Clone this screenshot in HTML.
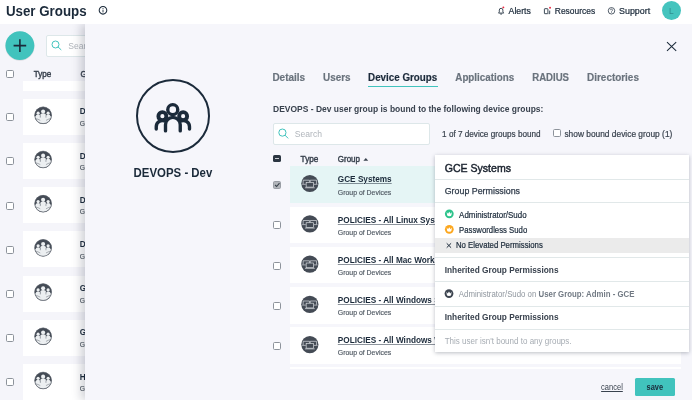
<!DOCTYPE html>
<html lang="en">
<head>
<meta charset="utf-8">
<title>User Groups</title>
<style>
*{box-sizing:border-box;margin:0;padding:0}
html,body{width:692px;height:400px;overflow:hidden;background:#f5f5fa;font-family:"Liberation Sans",sans-serif;color:#1b2a3a}
.a{position:absolute}
.t{position:absolute;white-space:nowrap;line-height:1.12;transform-origin:0 50%}
svg{position:absolute;overflow:visible}
.lrow{left:23px;width:80px;height:36px;background:#fff}
.cb{position:absolute;width:8px;height:8px;border:1px solid #8d939b;border-radius:1.6px;background:#fff}
.row{left:290.2px;width:391px;height:36.6px;background:#fff}
.hr{position:absolute;left:435px;width:254px;height:1px;background:#e1e8e9}
</style>
</head>
<body>
<div id="root" style="position:absolute;left:0;top:0;width:692px;height:400px;will-change:transform">
<!-- ============ background page (User Groups list) ============ -->
<div class="a" style="left:0;top:24px;width:692px;height:376px;background:#f5f5fa"></div>
<svg style="left:0px;top:24px" width="40" height="40" viewBox="0 24 40 40"><circle cx="19.9" cy="46.2" r="14.6" fill="rgba(0,0,0,.10)"/><circle cx="19.9" cy="45.6" r="14.45" fill="#41c3bd"/></svg>
<svg style="left:13px;top:39px;transform:translate(0.6px,0.3px)" width="12.6" height="12.6" viewBox="0 0 12.6 12.6"><path d="M6.3 0v12.6M0 6.3h12.6" stroke="#1b2a3a" stroke-width="1.6" fill="none"/></svg>
<div class="a" style="left:46.4px;top:35.4px;width:120px;height:21.4px;background:#fff;border:1px solid #dde7e9;border-radius:2px"></div>
<svg style="left:51px;top:40px;transform:translate(0.4px,0.4px)" width="10" height="9.6" viewBox="0 0 10 9.6"><circle cx="4.1" cy="4.1" r="3.5" fill="none" stroke="#41c3bd" stroke-width="1"/><path d="M6.7 6.6L9.6 9.3" stroke="#41c3bd" stroke-width="1" stroke-linecap="round"/></svg>
<div class="cb" style="left:6px;top:70.4px"></div>
<div class="a lrow" style="top:81.4px;height:9.2px"></div>
<div class="a lrow" style="top:99px;height:36px"></div>
<div class="a lrow" style="top:143px;height:36px"></div>
<div class="a lrow" style="top:187px;height:36px"></div>
<div class="a lrow" style="top:231px;height:36px"></div>
<div class="a lrow" style="top:276px;height:36px"></div>
<div class="a lrow" style="top:320px;height:36px"></div>
<div class="a lrow" style="top:364px;height:40px"></div>
<div class="cb" style="left:6px;top:113px"></div>
<div class="cb" style="left:6px;top:157px"></div>
<div class="cb" style="left:6px;top:202px"></div>
<div class="cb" style="left:6px;top:246px"></div>
<div class="cb" style="left:6px;top:290px"></div>
<div class="cb" style="left:6px;top:334px"></div>
<div class="cb" style="left:6px;top:378px"></div>
<svg width="0" height="0" style="left:0;top:0">
  <defs>
    <clipPath id="ugc"><circle cx="8.7" cy="8.7" r="8.3"/></clipPath>
    <g id="ug">
      <circle cx="8.7" cy="8.7" r="8.6" fill="#444b55"/>
      <g clip-path="url(#ugc)" fill="#eceff1">
        <path d="M0 9.5q4.3 1.4 8.7 1.4t8.7-1.4V18H0z"/>
        <circle cx="3.7" cy="6.55" r="1.6"/><path d="M1.35 12V9.7q0-1.7 2.3-1.7t2.3 1.7V12z"/>
        <circle cx="13.7" cy="6.55" r="1.6"/><path d="M11.45 12V9.7q0-1.7 2.3-1.7t2.3 1.7V12z"/>
        <circle cx="8.7" cy="4.85" r="2.05"/><path d="M5.85 13V8.6q0-2 2.85-2t2.85 2V13z"/>
      </g>
      <g stroke="#444b55" stroke-width=".4" fill="none">
        <path d="M5.85 8.6v2.5M11.55 8.6v2.5M1 11.9q2.8 .6 4.85 1.9M16.4 11.9q-2.8 .6-4.85 1.9"/>
      </g>
      <circle cx="8.7" cy="8.7" r="8.35" fill="none" stroke="#59606a" stroke-width=".6"/>
    </g>
    <g id="dg">
      <circle cx="8.6" cy="8.6" r="8.6" fill="#444b55"/>
      <g fill="none" stroke="#dde0e4" stroke-width=".68">
        <path d="M1.9 9V5.3h6.3v2.1M15.3 9V5.3H9v2.1"/>
        <path d="M.9 9.4h3.6M12.7 9.4h3.6"/>
        <rect x="4.9" y="7.5" width="7.4" height="4.7" fill="#444b55"/>
        <path d="M3.7 12.9h9.8"/>
      </g>
    </g>
    <g id="crown">
      <path d="M1.8 2.6L3.1 4.3L4.4 2.35L5.7 4.3L7 2.6L6.6 5.6Q6.5 6.8 4.4 6.8Q2.3 6.8 2.2 5.6z" fill="#fff"/>
    </g>
  </defs>
</svg>
<svg style="left:34px;top:106px;transform:translate(0.42px,0.6px)" width="17.4" height="17.4"><use href="#ug"/></svg>
<svg style="left:34px;top:150px;transform:translate(0.42px,0.8px)" width="17.4" height="17.4"><use href="#ug"/></svg>
<svg style="left:34px;top:195px;transform:translate(0.42px,0.0px)" width="17.4" height="17.4"><use href="#ug"/></svg>
<svg style="left:34px;top:239px;transform:translate(0.42px,0.2px)" width="17.4" height="17.4"><use href="#ug"/></svg>
<svg style="left:34px;top:283px;transform:translate(0.42px,0.4px)" width="17.4" height="17.4"><use href="#ug"/></svg>
<svg style="left:34px;top:327px;transform:translate(0.42px,0.6px)" width="17.4" height="17.4"><use href="#ug"/></svg>
<svg style="left:34px;top:371px;transform:translate(0.42px,0.8px)" width="17.4" height="17.4"><use href="#ug"/></svg>
<div class="t" id="t5" style="left:68px;top:42px;line-height:9px;font-size:8.2px;font-weight:400;color:#b0b5bb;transform:translateX(0.30px) scaleX(1.048);">Search</div>
<div class="t" id="t6" style="left:33px;top:70px;line-height:9px;font-size:8.2px;font-weight:400;color:#39424e;transform:translateX(0.80px) scaleX(0.986);-webkit-text-stroke:0.4px #39424e">Type</div>
<div class="t" id="t7" style="left:80px;top:70px;line-height:9px;font-size:8.2px;font-weight:400;color:#39424e;transform:translateX(0.50px) scaleX(0.975);-webkit-text-stroke:0.4px #39424e">Group</div>
<div class="t" id="t8" style="left:79px;top:106px;line-height:10px;font-size:8.4px;font-weight:700;color:#1b2a3a;transform:translateX(0.80px) scaleX(0.981);">DEVOPS - Admin</div>
<div class="t" id="t9" style="left:79px;top:120px;line-height:7px;font-size:6.7px;font-weight:400;color:#4f5862;transform:translateX(0.70px) scaleX(1.000);-webkit-text-stroke:0.15px #4f5862">Group of Users</div>
<div class="t" id="t10" style="left:79px;top:151px;line-height:10px;font-size:8.4px;font-weight:700;color:#1b2a3a;transform:translateX(0.80px) scaleX(0.981);">DEVOPS - Dev</div>
<div class="t" id="t11" style="left:79px;top:164px;line-height:7px;font-size:6.7px;font-weight:400;color:#4f5862;transform:translateX(0.70px) scaleX(1.000);-webkit-text-stroke:0.15px #4f5862">Group of Users</div>
<div class="t" id="t12" style="left:79px;top:195px;line-height:10px;font-size:8.4px;font-weight:700;color:#1b2a3a;transform:translateX(0.80px) scaleX(0.981);">DEVOPS - QA</div>
<div class="t" id="t13" style="left:79px;top:208px;line-height:7px;font-size:6.7px;font-weight:400;color:#4f5862;transform:translateX(0.70px) scaleX(1.000);-webkit-text-stroke:0.15px #4f5862">Group of Users</div>
<div class="t" id="t14" style="left:79px;top:239px;line-height:10px;font-size:8.4px;font-weight:700;color:#1b2a3a;transform:translateX(0.80px) scaleX(0.981);">DEVOPS - Staging</div>
<div class="t" id="t15" style="left:79px;top:253px;line-height:7px;font-size:6.7px;font-weight:400;color:#4f5862;transform:translateX(0.70px) scaleX(1.000);-webkit-text-stroke:0.15px #4f5862">Group of Users</div>
<div class="t" id="t16" style="left:79px;top:283px;line-height:10px;font-size:8.4px;font-weight:700;color:#1b2a3a;transform:translateX(0.80px) scaleX(0.981);">GCE - Admin</div>
<div class="t" id="t17" style="left:79px;top:297px;line-height:7px;font-size:6.7px;font-weight:400;color:#4f5862;transform:translateX(0.70px) scaleX(1.000);-webkit-text-stroke:0.15px #4f5862">Group of Users</div>
<div class="t" id="t18" style="left:79px;top:327px;line-height:10px;font-size:8.4px;font-weight:700;color:#1b2a3a;transform:translateX(0.80px) scaleX(0.981);">GCE - Users</div>
<div class="t" id="t19" style="left:79px;top:341px;line-height:7px;font-size:6.7px;font-weight:400;color:#4f5862;transform:translateX(0.70px) scaleX(1.000);-webkit-text-stroke:0.15px #4f5862">Group of Users</div>
<div class="t" id="t20" style="left:79px;top:372px;line-height:10px;font-size:8.4px;font-weight:700;color:#1b2a3a;transform:translateX(0.80px) scaleX(0.981);">HR - All</div>
<div class="t" id="t21" style="left:79px;top:385px;line-height:7px;font-size:6.7px;font-weight:400;color:#4f5862;transform:translateX(0.70px) scaleX(1.000);-webkit-text-stroke:0.15px #4f5862">Group of Users</div>

<!-- ============ slide-over panel ============ -->
<div class="a" style="left:85px;top:24px;width:607px;height:376px;background:#f6f6fb;box-shadow:-4px 0 9px rgba(40,45,70,.22)"></div>
<div class="a" style="left:136.2px;top:79.3px;width:74px;height:74px;border-radius:50%;border:2.1px solid #1b2a3a"></div>
<svg style="left:143px;top:92px" width="60" height="50" viewBox="0 0 480 400">
  <g fill="none" stroke="#1b2a3a" stroke-width="27" stroke-linecap="round" stroke-linejoin="round">
    <circle cx="238" cy="141" r="40"/>
    <path d="M180 311V262a59 59 0 0 1 118 0V311"/>
    <circle cx="155" cy="193" r="32" stroke-width="31"/>
    <circle cx="321" cy="193" r="32" stroke-width="31"/>
    <path d="M106 296V278a50 50 0 0 1 66 -47"/>
    <path d="M372 296V278a50 50 0 0 0 -66 -47"/>
  </g>
</svg>
<svg style="left:667px;top:42px" width="9.2" height="9" viewBox="0 0 9.2 9"><path d="M0 0L9.2 9M9.2 0L0 9" stroke="#1b2a3a" stroke-width="1.05" fill="none"/></svg>
<div class="a" style="left:368.2px;top:85.7px;width:69.4px;height:1.5px;background:#41c3bd"></div>
<div class="a" style="left:273.1px;top:123.4px;width:156.6px;height:21.4px;background:#fff;border:1px solid #dde7e9;border-radius:2px"></div>
<svg style="left:278px;top:128px;transform:translate(0.2px,0.4px)" width="10" height="10" viewBox="0 0 10 10"><circle cx="4.2" cy="4.2" r="3.6" fill="none" stroke="#41c3bd" stroke-width="1"/><path d="M6.9 6.9L9.7 9.7" stroke="#41c3bd" stroke-width="1" stroke-linecap="round"/></svg>
<div class="cb" style="left:553px;top:129px"></div>
<!-- table header -->
<div class="a" style="left:273.3px;top:154.7px;width:7.8px;height:7.8px;border-radius:1.6px;background:#2b3541"></div>
<div class="a" style="left:275px;top:158px;width:4.4px;height:1.2px;background:#c9cdd2"></div>
<svg style="left:363px;top:157px;transform:translate(0.4px,0.9px)" width="4.8" height="2.8" viewBox="0 0 4.8 2.8"><path d="M0 2.8L2.4 0L4.8 2.8z" fill="#39424e"/></svg>
<!-- rows -->
<div class="a row" style="top:166.2px;background:#e5f5f5"></div>
<div class="a row" style="top:206.5px"></div>
<div class="a row" style="top:246.8px"></div>
<div class="a row" style="top:287px"></div>
<div class="a row" style="top:327.3px"></div>
<div class="a row" style="top:367px;height:2.4px"></div>
<div class="a" style="left:273.3px;top:181px;width:7.8px;height:7.8px;border-radius:1.6px;background:#b3b6bb;border:1px solid #9a9ea5"></div>
<svg style="left:274px;top:182px;transform:translate(0.6px,0.6px)" width="5.4" height="4.6" viewBox="0 0 5.4 4.6"><path d="M.5 2.4L2 3.9L4.9 .5" stroke="#3a424c" stroke-width="1.1" fill="none"/></svg>
<div class="cb" style="left:273.3px;top:221.3px"></div>
<div class="cb" style="left:273.3px;top:261.6px"></div>
<div class="cb" style="left:273.3px;top:301.8px"></div>
<div class="cb" style="left:273.3px;top:342.1px"></div>
<svg style="left:301px;top:174px;transform:translate(0.25px,0.9px)" width="17.2" height="17.2"><use href="#dg"/></svg>
<svg style="left:301px;top:215px;transform:translate(0.25px,0.2px)" width="17.2" height="17.2"><use href="#dg"/></svg>
<svg style="left:301px;top:255px;transform:translate(0.25px,0.5px)" width="17.2" height="17.2"><use href="#dg"/></svg>
<svg style="left:301px;top:295px;transform:translate(0.25px,0.7px)" width="17.2" height="17.2"><use href="#dg"/></svg>
<svg style="left:301px;top:336px;transform:translate(0.25px,0.0px)" width="17.2" height="17.2"><use href="#dg"/></svg>
<div class="t" id="t22" style="left:133px;top:166px;line-height:14px;font-size:12.3px;font-weight:700;color:#1b2a3a;transform:translateX(0.60px) scaleX(0.929);">DEVOPS - Dev</div>
<div class="t" id="t23" style="left:272px;top:72px;line-height:11px;font-size:10.4px;font-weight:700;color:#6a737d;transform:translateX(0.40px) scaleX(0.962);-webkit-text-stroke:0.18px #6a737d">Details</div>
<div class="t" id="t24" style="left:323px;top:72px;line-height:11px;font-size:10.4px;font-weight:700;color:#6a737d;transform:translateX(0.00px) scaleX(0.952);-webkit-text-stroke:0.18px #6a737d">Users</div>
<div class="t" id="t25" style="left:368px;top:72px;line-height:11px;font-size:10.4px;font-weight:700;color:#1b2a3a;transform:translateX(0.10px) scaleX(0.942);-webkit-text-stroke:0.18px #1b2a3a">Device Groups</div>
<div class="t" id="t26" style="left:455px;top:72px;line-height:11px;font-size:10.4px;font-weight:700;color:#6a737d;transform:translateX(0.30px) scaleX(0.943);-webkit-text-stroke:0.18px #6a737d">Applications</div>
<div class="t" id="t27" style="left:532px;top:72px;line-height:11px;font-size:10.4px;font-weight:700;color:#6a737d;transform:translateX(0.20px) scaleX(0.924);-webkit-text-stroke:0.18px #6a737d">RADIUS</div>
<div class="t" id="t28" style="left:587px;top:72px;line-height:11px;font-size:10.4px;font-weight:700;color:#6a737d;transform:translateX(0.10px) scaleX(0.954);-webkit-text-stroke:0.18px #6a737d">Directories</div>
<div class="t" id="t29" style="left:273px;top:104px;line-height:10px;font-size:8.5px;font-weight:700;color:#39424e;transform:translateX(0.10px) scaleX(0.997);">DEVOPS - Dev user group is bound to the following device groups:</div>
<div class="t" id="t30" style="left:294px;top:130px;line-height:9px;font-size:8.2px;font-weight:400;color:#b0b5bb;transform:translateX(0.80px) scaleX(1.048);">Search</div>
<div class="t" id="t31" style="left:442px;top:130px;line-height:9px;font-size:8.2px;font-weight:400;color:#39424e;transform:translateX(0.10px) scaleX(0.997);-webkit-text-stroke:0.2px #39424e">1 of 7 device groups bound</div>
<div class="t" id="t32" style="left:564px;top:130px;line-height:9px;font-size:8.2px;font-weight:400;color:#39424e;transform:translateX(0.40px) scaleX(1.022);-webkit-text-stroke:0.2px #39424e">show bound device group (1)</div>
<div class="t" id="t33" style="left:300px;top:155px;line-height:9px;font-size:8.2px;font-weight:400;color:#39424e;transform:translateX(0.60px) scaleX(0.997);-webkit-text-stroke:0.4px #39424e">Type</div>
<div class="t" id="t34" style="left:337px;top:155px;line-height:9px;font-size:8.2px;font-weight:400;color:#39424e;transform:translateX(0.80px) scaleX(0.975);-webkit-text-stroke:0.4px #39424e">Group</div>
<div class="t" id="t35" style="left:337px;top:174px;line-height:10px;font-size:8.4px;font-weight:700;color:#1b2a3a;transform:translateX(0.80px) scaleX(0.981);text-decoration:underline;text-underline-offset:.8px;text-decoration-thickness:.6px;text-decoration-color:rgba(27,42,58,.5)">GCE Systems</div>
<div class="t" id="t36" style="left:337px;top:189px;line-height:7px;font-size:6.9px;font-weight:400;color:#4f5862;transform:translateX(0.80px) scaleX(1.003);-webkit-text-stroke:0.15px #4f5862">Group of Devices</div>
<div class="t" id="t37" style="left:337px;top:215px;line-height:10px;font-size:8.4px;font-weight:700;color:#1b2a3a;transform:translateX(0.80px) scaleX(0.981);text-decoration:underline;text-underline-offset:.8px;text-decoration-thickness:.6px;text-decoration-color:rgba(27,42,58,.5)">POLICIES - All Linux Systems</div>
<div class="t" id="t38" style="left:337px;top:229px;line-height:7px;font-size:6.9px;font-weight:400;color:#4f5862;transform:translateX(0.80px) scaleX(1.003);-webkit-text-stroke:0.15px #4f5862">Group of Devices</div>
<div class="t" id="t39" style="left:337px;top:255px;line-height:10px;font-size:8.4px;font-weight:700;color:#1b2a3a;transform:translateX(0.80px) scaleX(0.981);text-decoration:underline;text-underline-offset:.8px;text-decoration-thickness:.6px;text-decoration-color:rgba(27,42,58,.5)">POLICIES - All Mac Workstations</div>
<div class="t" id="t40" style="left:337px;top:269px;line-height:7px;font-size:6.9px;font-weight:400;color:#4f5862;transform:translateX(0.80px) scaleX(1.003);-webkit-text-stroke:0.15px #4f5862">Group of Devices</div>
<div class="t" id="t41" style="left:337px;top:295px;line-height:10px;font-size:8.4px;font-weight:700;color:#1b2a3a;transform:translateX(0.80px) scaleX(0.981);text-decoration:underline;text-underline-offset:.8px;text-decoration-thickness:.6px;text-decoration-color:rgba(27,42,58,.5)">POLICIES - All Windows Servers</div>
<div class="t" id="t42" style="left:337px;top:309px;line-height:7px;font-size:6.9px;font-weight:400;color:#4f5862;transform:translateX(0.80px) scaleX(1.003);-webkit-text-stroke:0.15px #4f5862">Group of Devices</div>
<div class="t" id="t43" style="left:337px;top:335px;line-height:10px;font-size:8.4px;font-weight:700;color:#1b2a3a;transform:translateX(0.80px) scaleX(0.981);text-decoration:underline;text-underline-offset:.8px;text-decoration-thickness:.6px;text-decoration-color:rgba(27,42,58,.5)">POLICIES - All Windows Workstations</div>
<div class="t" id="t44" style="left:337px;top:349px;line-height:7px;font-size:6.9px;font-weight:400;color:#4f5862;transform:translateX(0.80px) scaleX(1.003);-webkit-text-stroke:0.15px #4f5862">Group of Devices</div>

<!-- ============ permissions popup ============ -->
<div class="a" style="left:434.8px;top:155.1px;width:254px;height:196.8px;background:#fff;box-shadow:0 1px 4px rgba(30,40,60,.30)"></div>
<div class="hr" style="top:179px"></div>
<div class="hr" style="top:202px"></div>
<div class="a" style="left:434.8px;top:238.4px;width:254px;height:14.2px;background:#ebebeb"></div>
<div class="hr" style="top:257px"></div>
<div class="hr" style="top:281px"></div>
<div class="hr" style="top:306px"></div>
<div class="hr" style="top:329px"></div>
<svg style="left:444px;top:209px;transform:translate(0.9px,0.4px)" width="8.8" height="8.8" viewBox="0 0 8.8 8.8"><circle cx="4.4" cy="4.4" r="4.4" fill="#2cc38b"/><use href="#crown"/></svg>
<svg style="left:444px;top:224px;transform:translate(0.9px,0.9px)" width="8.8" height="8.8" viewBox="0 0 8.8 8.8"><circle cx="4.4" cy="4.4" r="4.4" fill="#fca71f"/><use href="#crown"/></svg>
<svg style="left:446px;top:243px;transform:translate(0.4px,0.0px)" width="5" height="5" viewBox="0 0 5 5"><path d="M.3 .3L4.7 4.7M4.7 .3L.3 4.7" stroke="#1b2a3a" stroke-width="1" fill="none"/></svg>
<svg style="left:444px;top:289px;transform:translate(0.6px,0.2px)" width="8.8" height="8.8" viewBox="0 0 8.8 8.8"><circle cx="4.4" cy="4.4" r="4.4" fill="#3d4550"/><use href="#crown"/></svg>
<div class="t" id="t45" style="left:444px;top:162px;line-height:12px;font-size:10.5px;font-weight:400;color:#18202c;transform:translateX(0.70px) scaleX(1.005);-webkit-text-stroke:0.42px #18202c">GCE Systems</div>
<div class="t" id="t46" style="left:444px;top:186px;line-height:10px;font-size:8.8px;font-weight:400;color:#2f3b4a;transform:translateX(0.70px) scaleX(1.007);-webkit-text-stroke:0.25px #2f3b4a">Group Permissions</div>
<div class="t" id="t47" style="left:459px;top:211px;line-height:9px;font-size:8.2px;font-weight:400;color:#1b2a3a;transform:translateX(0.10px) scaleX(0.969);-webkit-text-stroke:0.2px #1b2a3a">Administrator/Sudo</div>
<div class="t" id="t48" style="left:459px;top:226px;line-height:9px;font-size:8.2px;font-weight:400;color:#1b2a3a;transform:translateX(0.10px) scaleX(0.947);-webkit-text-stroke:0.2px #1b2a3a">Passwordless Sudo</div>
<div class="t" id="t49" style="left:455px;top:241px;line-height:9px;font-size:8.2px;font-weight:400;color:#1b2a3a;transform:translateX(0.90px) scaleX(0.950);-webkit-text-stroke:0.2px #1b2a3a">No Elevated Permissions</div>
<div class="t" id="t50" style="left:444px;top:265px;line-height:10px;font-size:8.6px;font-weight:700;color:#39424e;transform:translateX(0.70px) scaleX(0.965);">Inherited Group Permissions</div>
<div class="t" id="t51" style="left:458px;top:290px;line-height:9px;font-size:8.2px;font-weight:400;color:#8f969e;transform:translateX(0.80px) scaleX(0.957);">Administrator/Sudo on <b style="color:#727a84">User Group: Admin - GCE</b></div>
<div class="t" id="t52" style="left:444px;top:312px;line-height:10px;font-size:8.6px;font-weight:700;color:#39424e;transform:translateX(0.70px) scaleX(0.965);">Inherited Group Permissions</div>
<div class="t" id="t53" style="left:444px;top:337px;line-height:9px;font-size:8.2px;font-weight:400;color:#a6acb3;transform:translateX(0.70px) scaleX(0.980);">This user isn't bound to any groups.</div>

<!-- ============ footer ============ -->
<div class="a" style="left:85px;top:369px;width:607px;height:31px;background:#f6f6fb"></div>
<div class="a" style="left:635px;top:378.2px;width:40.2px;height:17.4px;background:#41c3bd;border-radius:1.5px"></div>
<div class="t" id="t54" style="left:601px;top:383px;line-height:9px;font-size:8.2px;font-weight:400;color:#39424e;transform:translateX(0.10px) scaleX(0.917);text-decoration:underline">cancel</div>
<div class="t" id="t55" style="left:646px;top:382px;line-height:10px;font-size:9px;font-weight:700;color:#1b2a3a;transform:translateX(0.60px) scaleX(0.824);">save</div>

<!-- ============ top header ============ -->
<div class="a" style="left:0;top:0;width:692px;height:23.8px;background:#fff"></div>
<svg style="left:98px;top:5px;transform:translate(0.5px,0.8px)" width="9" height="9" viewBox="0 0 9 9"><circle cx="4.5" cy="4.5" r="3.8" fill="none" stroke="#1b2a3a" stroke-width="1.05"/><rect x="4.05" y="3.9" width=".9" height="2.7" fill="#1b2a3a"/><rect x="4.05" y="2.3" width=".9" height=".95" fill="#1b2a3a"/></svg>
<svg style="left:498px;top:6px;transform:translate(0.0px,0.2px)" width="7" height="9" viewBox="0 0 7 9"><path d="M.6 6.9h5L4.9 5.7V3.9a1.8 1.8 0 0 0-3.6 0V5.7z" fill="none" stroke="#1b2a3a" stroke-width=".85" stroke-linejoin="round"/><path d="M2.3 7.9h1.6" stroke="#1b2a3a" stroke-width=".85"/><circle cx="5.35" cy="1.2" r=".95" fill="#e8273f"/></svg>
<svg style="left:543px;top:6px;transform:translate(0.9px,0.6px)" width="8" height="8" viewBox="0 0 8 8"><rect x=".5" y="2.1" width="3.5" height="5" rx=".5" fill="none" stroke="#1b2a3a" stroke-width=".85"/><path d="M5.8 4v3.1H4.8" fill="none" stroke="#1b2a3a" stroke-width=".85"/><circle cx="6.15" cy="1.1" r=".95" fill="#e8273f"/></svg>
<svg style="left:607px;top:7px;transform:translate(0.8px,0.1px)" width="7.4" height="7.4" viewBox="0 0 7.4 7.4"><circle cx="3.7" cy="3.7" r="3.25" fill="none" stroke="#1b2a3a" stroke-width=".75"/><path d="M2.7 3a1 1 0 1 1 1.5 .85c-.4 .25-.5 .4-.5 .8" fill="none" stroke="#1b2a3a" stroke-width=".65"/><rect x="3.4" y="5.1" width=".65" height=".65" fill="#1b2a3a"/></svg>
<div class="a" style="left:662.1px;top:1.1px;width:18.9px;height:18.9px;border-radius:50%;background:#45c4be"></div>
<div class="t" id="t0" style="left:5px;top:4px;line-height:15px;font-size:13.8px;font-weight:700;color:#1b2a3a;transform:translateX(0.90px) scaleX(0.966);">User Groups</div>
<div class="t" id="t1" style="left:508px;top:7px;line-height:9px;font-size:8.2px;font-weight:400;color:#1b2a3a;transform:translateX(0.60px) scaleX(1.065);-webkit-text-stroke:0.2px #1b2a3a">Alerts</div>
<div class="t" id="t2" style="left:554px;top:7px;line-height:9px;font-size:8.2px;font-weight:400;color:#1b2a3a;transform:translateX(0.80px) scaleX(1.030);-webkit-text-stroke:0.2px #1b2a3a">Resources</div>
<div class="t" id="t3" style="left:619px;top:7px;line-height:9px;font-size:8.2px;font-weight:400;color:#1b2a3a;transform:translateX(0.00px) scaleX(1.088);-webkit-text-stroke:0.2px #1b2a3a">Support</div>
<div class="t" id="t4" style="left:669px;top:7px;line-height:9px;font-size:8.2px;font-weight:400;color:#2f8e90;transform:translateX(0.10px) scaleX(1.030);">L</div>
</div>
</body>
</html>
